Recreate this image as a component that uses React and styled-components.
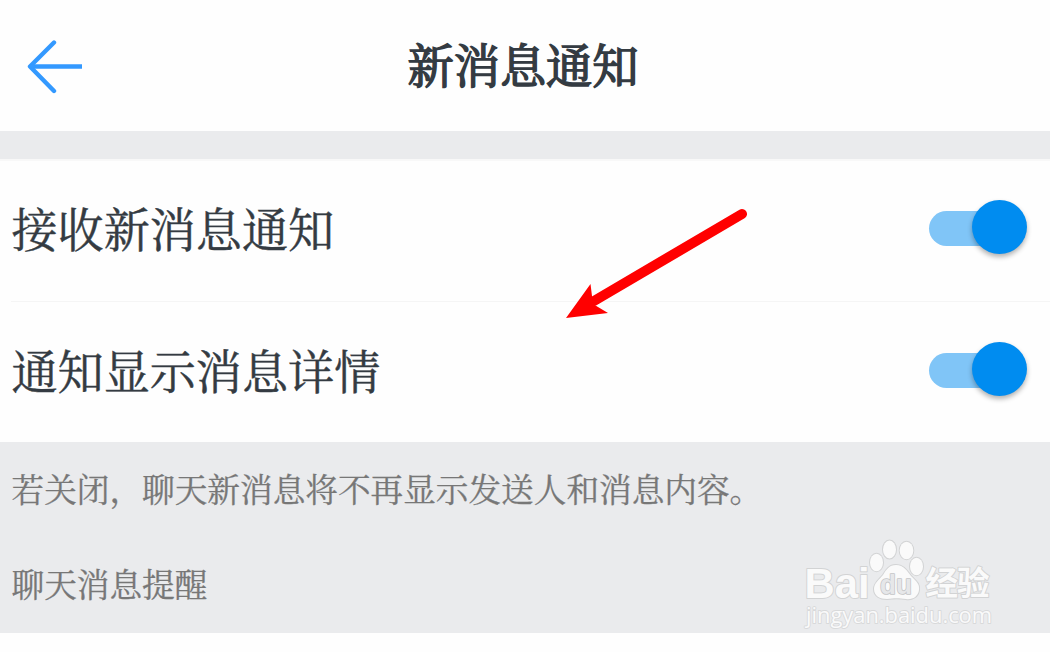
import React from "react";
import styled, { createGlobalStyle } from "styled-components";

const GlobalStyle = createGlobalStyle`
  body {
    margin: 0;
    background: #fefefe;
    overflow: hidden;
  }
`;

const Page = styled.div`
  position: relative;
  width: 1050px;
  height: 652px;
  font-family: "Noto Serif CJK SC", "Noto Sans CJK SC", serif;
  color: #343b42;
`;

const Header = styled.header`
  display: grid;
  grid-template-columns: 84px 1fr 88px;
  align-items: center;
  box-sizing: border-box;
  height: 131px;
  padding-bottom: 3px;
`;

const BackButton = styled.button`
  display: flex;
  padding: 0 0 0 24px;
  border: 0;
  background: none;
`;

const Title = styled.h1`
  margin: 0 0 2px;
  font-size: 46.2px;
  font-weight: 400;
  line-height: 60px;
  text-align: center;
  -webkit-text-stroke: 1.5px #343b42;
`;

const Gap = styled.div`
  height: 28px;
  background: #eaebed;
  border-bottom: 2px solid #f8f8f8;
`;

const List = styled.main`
  padding-left: 11px;
`;

const Row = styled.div`
  display: flex;
  align-items: center;
  justify-content: space-between;
  box-sizing: border-box;
  height: ${props => (props.$last ? 140 : 141)}px;
  padding: 0 23px ${props => (props.$last ? 6 : 8)}px 0.5px;
  border-bottom: ${props => (props.$last ? "0" : "1px solid #f5f5f5")};
`;

const Label = styled.span`
  font-size: 46.1px;
  line-height: 60px;
  -webkit-text-stroke: 0.45px #343b42;
`;

const Switch = styled.button`
  display: flex;
  align-items: center;
  justify-content: flex-end;
  width: 98px;
  height: 54px;
  padding: 0;
  border: 0;
  background: none;
`;

const Track = styled.span`
  flex: none;
  width: 80px;
  height: 35px;
  margin: 3px -37px 0 0;
  border-radius: 18px;
  background: #80c5f7;
`;

const Thumb = styled.span`
  flex: none;
  width: 55px;
  height: 54px;
  border-radius: 50%;
  background: #008cf0;
  box-shadow: 0 3px 5px rgba(0, 0, 0, 0.3);
`;

const Footer = styled.footer`
  box-sizing: border-box;
  height: 191px;
  padding: 26px 11.5px 0;
  background: #eaebed;
  color: #777;
`;

const Hint = styled.p`
  margin: 0 0 55px;
  font-size: 32.65px;
  line-height: 40px;
  white-space: nowrap;
  -webkit-text-stroke: 0.3px #777;
`;

const Pointer = styled.svg`
  position: absolute;
  left: 560px;
  top: 200px;
`;

const Watermark = styled.svg`
  position: absolute;
  left: 796px;
  top: 532px;
`;

const SettingRow = ({ label, last }) => (
  <Row $last={last}>
    <Label>{label}</Label>
    <Switch type="button" role="switch" aria-checked="true">
      <Track />
      <Thumb />
    </Switch>
  </Row>
);

const App = () => {
  return (
    <>
      <GlobalStyle />
      <Page>
        <Header>
          <BackButton type="button">
            <svg width="60" height="60" viewBox="0 0 60 60" fill="none" stroke="#3399ff" strokeWidth="4.4">
              <path d="M30 8.5 6 32.5 30 57" strokeLinecap="round" strokeLinejoin="round" />
              <path d="M6 32.5H58" />
            </svg>
          </BackButton>
          <Title>新消息通知</Title>
        </Header>
        <Gap />
        <List>
          <SettingRow label="接收新消息通知" />
          <SettingRow label="通知显示消息详情" last />
        </List>
        <Footer>
          <Hint>若关闭，聊天新消息将不再显示发送人和消息内容。</Hint>
          <Hint>聊天消息提醒</Hint>
        </Footer>
        <Pointer width="200" height="130" viewBox="560 200 200 130">
          <path d="M742 214 594 301" stroke="#f00" strokeWidth="10" strokeLinecap="round" />
          <path d="M566 318 590.5 284 593 304 608 313Z" fill="#f00" />
        </Pointer>
        <Watermark width="210" height="104" viewBox="796 532 210 104">
          <g fill="#fafafa" stroke="#d2d3d4" strokeWidth="2" paintOrder="stroke" strokeLinejoin="round">
            <ellipse cx="876.5" cy="562.5" rx="6.5" ry="8.8" />
            <ellipse cx="889.5" cy="549.5" rx="6.5" ry="9" />
            <ellipse cx="906.5" cy="550.5" rx="6.8" ry="8.8" />
            <ellipse cx="916.5" cy="566.5" rx="6.5" ry="8.8" />
            <path d="M896 565C904 565 907 571 911 576C916 581 920 584 919 590C918 597 912 600 906 599C899 598 894 598 887 599C880 599 874 596 874 589C874 583 879 580 883 575C886 570 889 565 896 565Z" />
            <g fontFamily='"Liberation Sans", sans-serif' fontWeight="700">
              <text x="804.5" y="597.5" fontSize="43" textLength="65" lengthAdjust="spacingAndGlyphs">Bai</text>
              <text x="880" y="593.5" fontSize="27" textLength="32" lengthAdjust="spacingAndGlyphs" fill="#e6e7e9" stroke="#c4c5c7" strokeWidth="1.6">du</text>
            </g>
            <text x="925.5" y="595" fontSize="32.5" fontFamily='"Noto Sans CJK SC", sans-serif' fontWeight="700" textLength="64">经验</text>
            <text x="806" y="622.5" fontSize="22" fontFamily='"Open Sans", sans-serif' fontWeight="500" textLength="186" lengthAdjust="spacingAndGlyphs" stroke="#d8d9da" strokeWidth="1.8">jingyan.baidu.com</text>
          </g>
        </Watermark>
      </Page>
    </>
  );
};

export default App;
